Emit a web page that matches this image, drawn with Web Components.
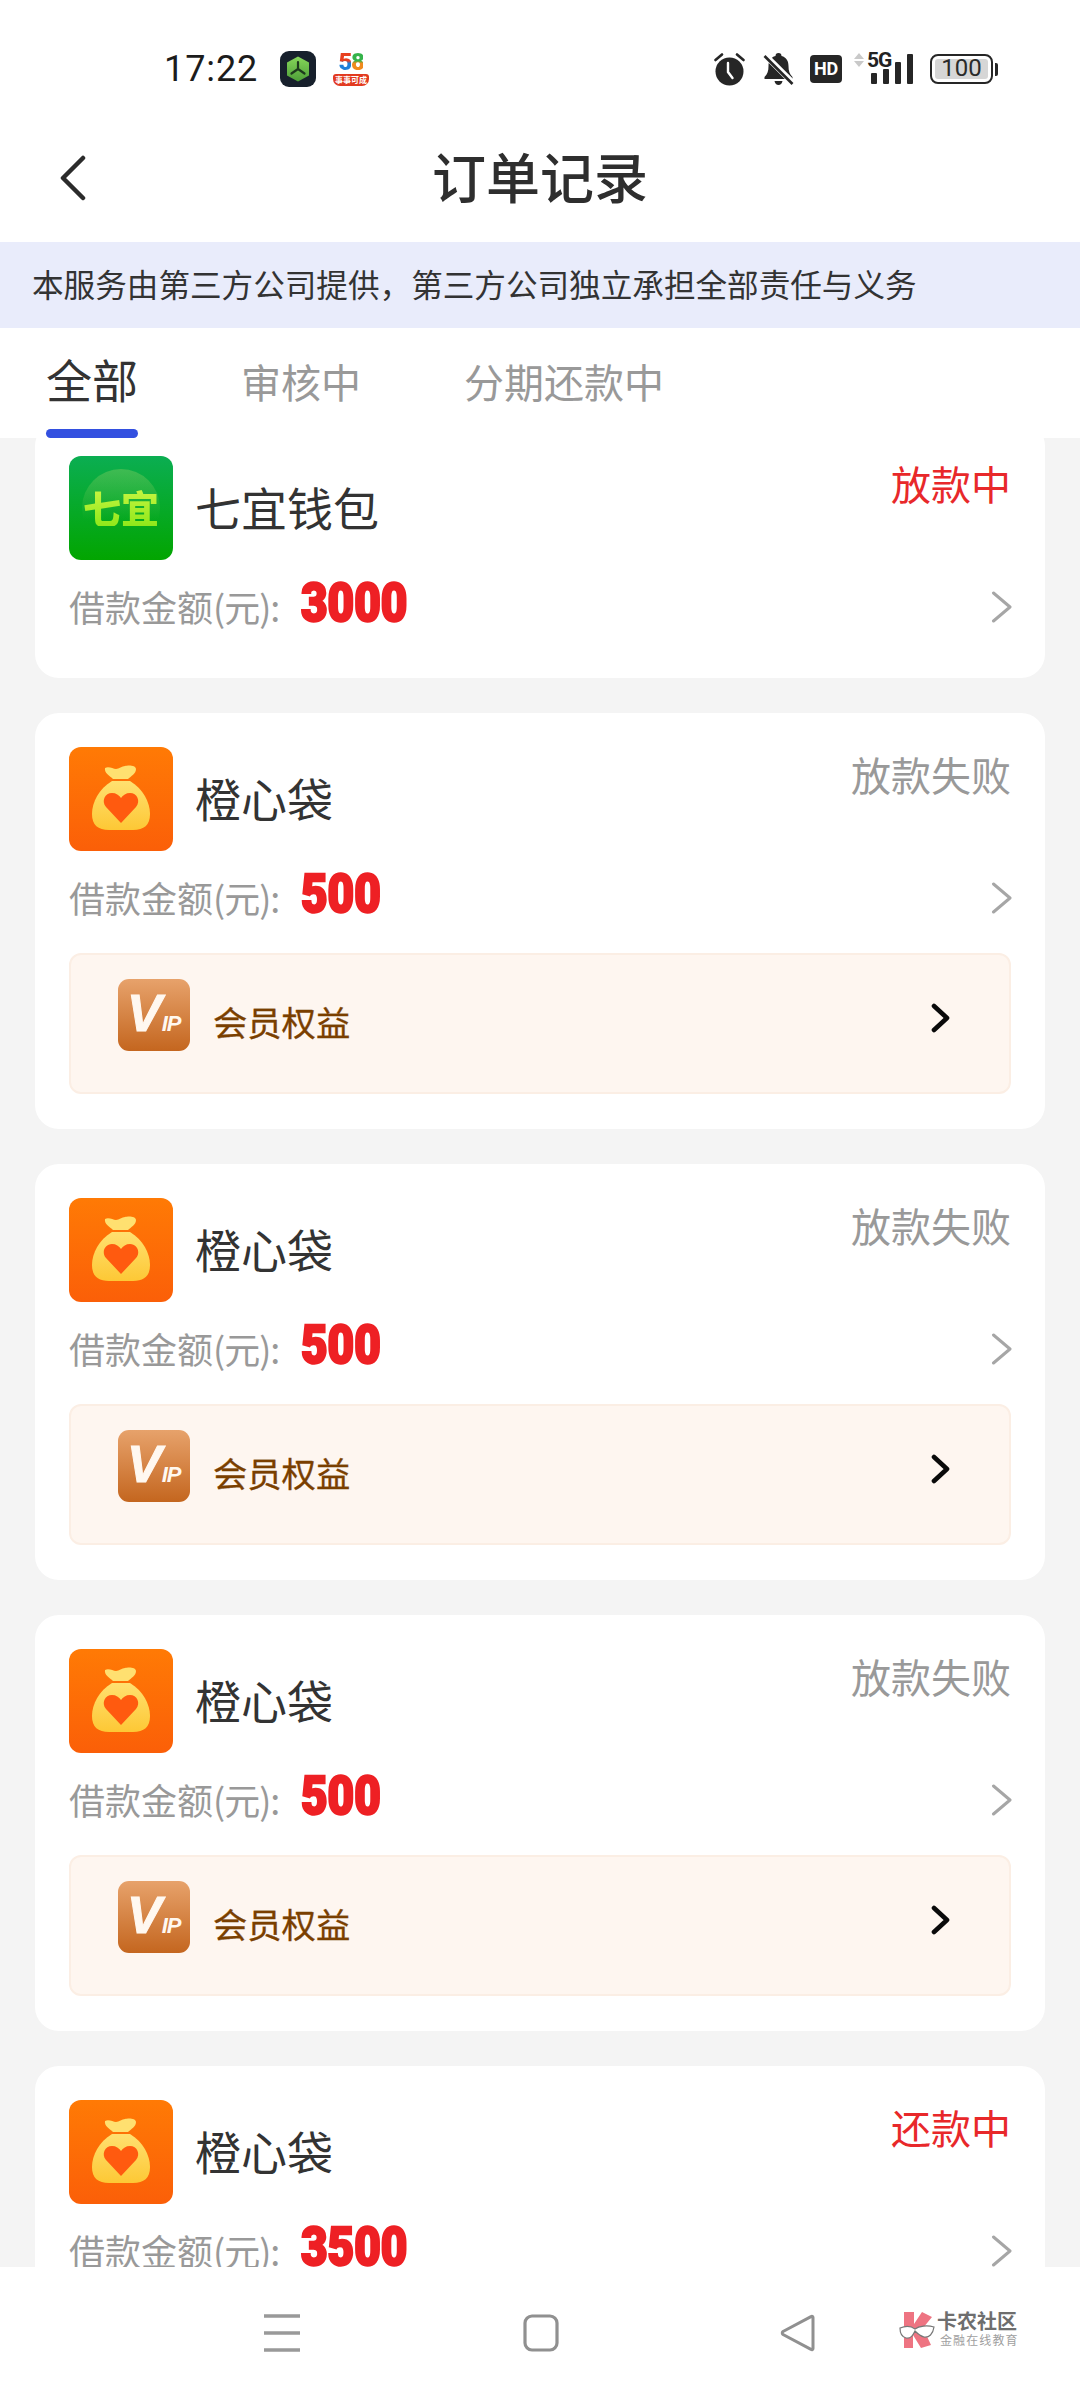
<!DOCTYPE html>
<html lang="zh">
<head>
<meta charset="utf-8">
<title>订单记录</title>
<style>
  html, body { margin: 0; padding: 0; }
  body {
    width: 1080px;
    height: 2400px;
    overflow: hidden;
    display: flex;
    flex-direction: column;
    background: #f4f4f4;
    font-family: "Noto Sans CJK SC", "Noto Sans", sans-serif;
  }
  order-list { flex: 1; min-height: 0; }
</style>
</head>
<body>
  <status-bar></status-bar>
  <page-header title="订单记录"></page-header>
  <notice-banner>本服务由第三方公司提供，第三方公司独立承担全部责任与义务</notice-banner>
  <order-tabs></order-tabs>
  <order-list>
    <order-card name="七宜钱包" status="放款中" amount="3000" app="qiyi" active plain></order-card>
    <order-card name="橙心袋" status="放款失败" amount="500" app="bag"></order-card>
    <order-card name="橙心袋" status="放款失败" amount="500" app="bag"></order-card>
    <order-card name="橙心袋" status="放款失败" amount="500" app="bag"></order-card>
    <order-card name="橙心袋" status="还款中" amount="3500" app="bag" active plain></order-card>
  </order-list>
  <nav-bar></nav-bar>

<script>
(function () {
    const CJK = '"Noto Sans CJK SC", "Noto Sans", sans-serif';

    class StatusBar extends HTMLElement {
        constructor() {
            super();
            this.attachShadow({mode: "open"}).innerHTML = `
            <style>
              :host { display: flex; align-items: center; height: 120px; background: #fff; padding: 18px 82px 0 164px; box-sizing: border-box; color: #222; flex: none; }
              .time { font: 400 36px Roboto, sans-serif; letter-spacing: .9px; color: #1c1c1c; width: 116px; }
              .app { width: 36px; height: 36px; flex: none; }
              .app58 { margin-left: 16px; width: 38px; height: 34px; display: flex; flex-direction: column; align-items: center; }
              .n { font: 900 24px/20px Roboto, sans-serif; letter-spacing: -1.500px; }
              .n i { font-style: normal; -webkit-background-clip: text; background-clip: text; color: transparent; }
              .pill { width: 36px; height: 12px; margin-top: 2px; border-radius: 3px 3px 7px 7px; background: #e23a20; color: #fff; font: 700 8px/12px ${CJK}; text-align: center; white-space: nowrap; overflow: hidden; }
              .right { margin-left: auto; display: flex; align-items: center; }
              svg { display: block; flex: none; }
              .hd { margin-left: 16px; width: 32px; height: 28px; border-radius: 4px; background: #262626; color: #fff; font: 700 18px/28px Roboto, sans-serif; text-align: center; letter-spacing: -.3px; }
              .net { position: relative; margin-left: 12px; width: 60px; height: 34px; }
              .g { position: absolute; left: 13px; top: -4px; font: 700 21px/24px Roboto, sans-serif; letter-spacing: -1px; color: #222; }
              .batt { margin-left: 16px; width: 63px; height: 30px; box-sizing: border-box; border: 2.5px solid #262626; border-radius: 8px; padding: 3px; position: relative; }
              .fill { height: 100%; background: #d6d6d6; border-radius: 3px; color: #2a2a2a; font: 400 24px/19px Roboto, sans-serif; text-align: center; }
              .tip { width: 3px; height: 13px; margin-left: 2px; background: #262626; border-radius: 0 2px 2px 0; }
            </style>
            <span class="time">17:22</span>
            <svg class="app" viewBox="0 0 36 36">
              <defs><linearGradient id="c" x1="0" y1="0" x2="0" y2="1"><stop offset="0" stop-color="#86d65a"/><stop offset="1" stop-color="#4d9e38"/></linearGradient></defs>
              <rect width="36" height="36" rx="9" fill="#17202c"/>
              <path d="M18 5.500 29 11.500V24.500L18 30.500 7 24.500V11.500Z" fill="url(#c)"/>
              <path d="M18 18V11M18 18 11.500 22.500M18 18 24.500 22.500" stroke="#1d3a1d" stroke-width="2.200" fill="none" stroke-linecap="round"/>
            </svg>
            <div class="app58"><div class="n"><i style="background-image:linear-gradient(#e8401f 45%,#1f7fd8 55%)">5</i><i style="background-image:linear-gradient(#35b34a 45%,#f08a1d 55%)">8</i></div><div class="pill">事事可成</div></div>
            <div class="right">
              <svg width="31" height="33" viewBox="0 0 31 33">
                <circle cx="15.500" cy="18.500" r="14" fill="#262626"/>
                <path d="M1.500 7 8 1.500M29.500 7 23 1.500" stroke="#262626" stroke-width="2.600" stroke-linecap="round"/>
                <path d="M14 10V19L18.500 25" stroke="#fff" stroke-width="2.400" fill="none" stroke-linecap="round"/>
              </svg>
              <svg width="31" height="34" viewBox="0 0 31 34" style="margin-left:18px">
                <path d="M15.500 1c2 0 3 1.300 3 3 5 1.200 7 5.300 7 10 0 5 1 8 4 11v2H1.500v-2c3-3 4-6 4-11 0-4.700 2-8.800 7-10 0-1.700 1-3 3-3z" fill="#262626"/>
                <path d="M11.500 29h8c-.5 2.500-2 4-4 4s-3.500-1.500-4-4z" fill="#262626"/>
                <path d="M2 3 30 31" stroke="#fff" stroke-width="6"/>
                <path d="M1.500 4 29.500 32" stroke="#262626" stroke-width="2.600"/>
              </svg>
              <div class="hd">HD</div>
              <div class="net">
                <svg width="60" height="34" viewBox="0 0 60 34" style="position:absolute;left:0;top:0">
                  <path d="M5 1 10 7H0ZM5 15 10 9H0Z" fill="#c9c9c9"/>
                  <rect x="17" y="21" width="6" height="11" rx="1" fill="#262626"/>
                  <rect x="29" y="17" width="6" height="15" rx="1" fill="#262626"/>
                  <rect x="41" y="10" width="6" height="22" rx="1" fill="#262626"/>
                  <rect x="53" y="2" width="6" height="30" rx="1" fill="#262626"/>
                </svg>
                <span class="g">5G</span>
              </div>
              <div class="batt"><div class="fill">100</div></div>
              <div class="tip"></div>
            </div>`;
        }
    }

    class PageHeader extends HTMLElement {
        constructor() {
            super();
            this.attachShadow({mode: "open"}).innerHTML = `
            <style>
              :host { display: flex; align-items: center; justify-content: center; position: relative; height: 122px; box-sizing: border-box; padding-bottom: 10px; background: #fff; flex: none; }
              h1 { margin: 0; font: 500 54px/1 ${CJK}; color: #2e2e2e; }
              svg { position: absolute; left: 58px; top: 35px; }
            </style>
            <svg width="32" height="46" viewBox="0 0 32 46"><path d="M25 3 5 23 25 43" fill="none" stroke="#2b2b2b" stroke-width="4.500" stroke-linecap="round" stroke-linejoin="round"/></svg>
            <h1>${this.getAttribute('title')}</h1>`;
        }
    }

    class NoticeBanner extends HTMLElement {
        constructor() {
            super();
            this.attachShadow({mode: "open"}).innerHTML = `
            <style>
              :host { display: flex; align-items: center; height: 86px; box-sizing: border-box; padding: 0 0 3px 32px; background: #e9ecfb; color: #333; font: 400 31.600px/1 ${CJK}; flex: none; }
            </style>
            <slot></slot>`;
        }
    }

    class OrderTabs extends HTMLElement {
        constructor() {
            super();
            this.attachShadow({mode: "open"}).innerHTML = `
            <style>
              :host { display: flex; height: 110px; padding-left: 46px; gap: 103px; background: #fff; flex: none; box-sizing: border-box; position: relative; z-index: 1; }
              .tab { position: relative; font: 400 40px/1 ${CJK}; color: #999; padding-top: 33px; white-space: nowrap; }
              .tab.on { font-size: 46px; color: #333; padding-top: 27px; }
              .tab.on::after { content: ""; position: absolute; left: 0; right: 0; bottom: 0; height: 9px; border-radius: 5px; background: #3350e0; }
            </style>
            <div class="tab on">全部</div>
            <div class="tab">审核中</div>
            <div class="tab">分期还款中</div>`;
        }
    }

    class OrderList extends HTMLElement {
        constructor() {
            super();
            this.attachShadow({mode: "open"}).innerHTML = `
            <style>
              :host { display: block; overflow: hidden; }
              .inner { display: flex; flex-direction: column; gap: 35px; padding: 0 35px; margin-top: -16px; }
            </style>
            <div class="inner"><slot></slot></div>`;
        }
    }

    class AppIcon extends HTMLElement {
        constructor() {
            super();
            const bag = `
              <svg width="104" height="104" viewBox="0 0 104 104" style="display:block">
                <defs>
                  <linearGradient id="o" x1="0" y1="0" x2="0" y2="1"><stop offset="0" stop-color="#ff7a05"/><stop offset="1" stop-color="#fb5f08"/></linearGradient>
                  <linearGradient id="y" x1="0" y1="0" x2="0" y2="1"><stop offset="0" stop-color="#ffe070"/><stop offset="1" stop-color="#fdc835"/></linearGradient>
                </defs>
                <rect width="104" height="104" rx="12" fill="url(#o)"/>
                <path d="M36 21c4-2 8 1 11 1 3 0 6-3 9-3 3-1 11-1 11 3 0 5-5 7-8 10H44c-3-3-9-6-8-11z" fill="#ffe070"/>
                <path d="M43 34h18c13 8 20 21 20 33 0 11-6 16-17 16H40c-11 0-17-5-17-16 0-12 7-25 20-33z" fill="url(#y)"/>
                <path d="M52 76 37 60c-5-6-1-14 6-14 4 0 7 2 9 5 2-3 5-5 9-5 7 0 11 8 6 14z" fill="#ff5a0f"/>
              </svg>`;
            const qiyi = `
              <div class="q"><div class="glow"></div><span>七宜</span></div>`;
            this.attachShadow({mode: "open"}).innerHTML = `
            <style>
              :host { display: block; width: 104px; height: 104px; flex: none; }
              .q { position: relative; width: 104px; height: 104px; border-radius: 12px; overflow: hidden; background: linear-gradient(#0bae52, #02a500); display: flex; align-items: center; justify-content: center; }
              .glow { position: absolute; left: 13px; top: 13px; width: 78px; height: 78px; border-radius: 50%; background: linear-gradient(rgba(150,210,100,.38), rgba(20,170,40,0) 65%); }
              .q span { position: relative; font: 900 38px/1 ${CJK}; background: linear-gradient(#c8f542, #8fe81a); -webkit-background-clip: text; background-clip: text; color: transparent; white-space: nowrap; margin-top: -2px; }
            </style>
            ${this.getAttribute('app') === 'qiyi' ? qiyi : bag}`;
        }
    }

    class VipRow extends HTMLElement {
        constructor() {
            super();
            this.attachShadow({mode: "open"}).innerHTML = `
            <style>
              :host { display: flex; align-items: flex-start; height: 141px; margin-top: 22px; box-sizing: border-box; padding: 24px 58px 0 47px; background: #fef6f0; border: 2px solid #fbeee4; border-radius: 12px; }
              .badge { width: 72px; height: 72px; border-radius: 11px; background: linear-gradient(#e7a26b, #c4661f); flex: none; color: #fff8f0; font-family: "Liberation Sans", sans-serif; font-weight: 700; font-style: italic; display: flex; align-items: baseline; padding: 6px 0 0 9px; box-sizing: border-box; }
              .v { font-size: 52px; line-height: 56px; -webkit-text-stroke: 1px #fff8f0; }
              .ip { font-size: 22px; line-height: 56px; letter-spacing: -1px; }
              .label { margin-left: 23px; font: 400 34.300px/72px ${CJK}; color: #7a3f00; margin-top: 6px; -webkit-text-stroke: .3px #7a3f00; }
              svg { margin-left: auto; margin-top: 24px; display: block; }
            </style>
            <div class="badge"><span class="v">V</span><span class="ip">IP</span></div>
            <span class="label">会员权益</span>
            <svg width="20" height="30" viewBox="0 0 20 30"><path d="M3 3 16 15 3 27" fill="none" stroke="#0a0a0a" stroke-width="4.600" stroke-linecap="round" stroke-linejoin="round"/></svg>`;
        }
    }

    class OrderCard extends HTMLElement {
        constructor() {
            super();
            const plain = this.hasAttribute('plain');
            this.attachShadow({mode: "open"}).innerHTML = `
            <style>
              :host { display: block; flex: none; padding: 34px 34px ${plain ? 38 : 35}px; background: #fff; border-radius: 24px; }
              .top { display: flex; align-items: flex-start; }
              .name { margin: 25px 0 0 22px; font: 400 46px/1.1 ${CJK}; color: #333; }
              .status { margin: 0 0 0 auto; font: 400 40px/54px ${CJK}; color: #999; }
              :host([active]) .status { color: #e8282a; }
              .row { display: flex; align-items: center; height: 66px; margin-top: 14px; }
              .lbl { font: 400 36px/1 ${CJK}; color: #999; white-space: nowrap; margin-top: -2px; }
              .lbl span { letter-spacing: -1px; }
              .amt { display: block; width: 0; margin-left: 22px; margin-top: -8px; font: 900 54px/1 Roboto, sans-serif; color: #ee2024; -webkit-text-stroke: 2.500px #ee2024; paint-order: stroke; transform: scaleX(.85); transform-origin: left center; white-space: nowrap; }
              .row svg { margin-left: auto; display: block; margin-right: -2px; }
            </style>
            <div class="top">
              <app-icon app="${this.getAttribute('app')}"></app-icon>
              <div class="name">${this.getAttribute('name')}</div>
              <div class="status">${this.getAttribute('status')}</div>
            </div>
            <div class="row">
              <span class="lbl">借款金额<span>(元):</span></span>
              <span class="amt">${this.getAttribute('amount')}</span>
              <svg width="22" height="32" viewBox="0 0 22 32"><path d="M2.500 2 19 16 2.500 30" fill="none" stroke="#a6a6a6" stroke-width="3" stroke-linecap="round" stroke-linejoin="round"/></svg>
            </div>
            ${plain ? '' : '<vip-row></vip-row>'}`;
        }
    }

    class NavBar extends HTMLElement {
        constructor() {
            super();
            this.attachShadow({mode: "open"}).innerHTML = `
            <style>
              :host { display: flex; position: relative; z-index: 2; align-items: flex-start; height: 133px; padding: 47px 0 0 263px; box-sizing: border-box; background: #fff; flex: none; }
              svg { display: block; flex: none; }
              .logo { display: flex; margin: -3px 0 0 83px; }
              .txt { margin-left: 2px; display: flex; flex-direction: column; }
              .a { font: 700 20px/20px ${CJK}; color: #6e6e6e; white-space: nowrap; }
              .b { font: 400 12px/14px ${CJK}; color: #a0a0a0; letter-spacing: 1.100px; white-space: nowrap; margin: 2px 0 0 3px; }
            </style>
            <svg width="38" height="38" viewBox="0 0 38 38"><path d="M1 2H37M1 19H37M1 36H37" stroke="#999" stroke-width="3.600"/></svg>
            <svg width="36" height="38" viewBox="0 0 36 38" style="margin-left:222px"><rect x="2" y="2" width="32" height="34" rx="7" fill="none" stroke="#909090" stroke-width="3.200"/></svg>
            <svg width="36" height="38" viewBox="0 0 36 38" style="margin-left:221px"><path d="M33 3.500V34.500c0 1-1 1.500-2 .8L3 20.500c-1-.8-1-2.200 0-3L31 2.700c1-.7 2-.2 2 .8z" fill="none" stroke="#909090" stroke-width="3" stroke-linejoin="round"/></svg>
            <div class="logo">
              <svg width="36" height="38" viewBox="0 0 36 38">
                <path d="M5 1H15V13L23 1 33 6 24 17 32 34 22 37 14 24V37H5Z" fill="#ee7482"/>
                <path d="M1 17C6 15 12 15 16 18 20 15 28 14 35 16 34 23 30 27 25 26 21 25 18 22 16 20 14 24 12 28 7 27 3 26 1 22 1 17Z" fill="#fff" stroke="#777" stroke-width="1.200"/>
              </svg>
              <div class="txt"><span class="a">卡农社区</span><span class="b">金融在线教育</span></div>
            </div>`;
        }
    }

    customElements.define('status-bar', StatusBar);
    customElements.define('page-header', PageHeader);
    customElements.define('notice-banner', NoticeBanner);
    customElements.define('order-tabs', OrderTabs);
    customElements.define('order-list', OrderList);
    customElements.define('app-icon', AppIcon);
    customElements.define('vip-row', VipRow);
    customElements.define('order-card', OrderCard);
    customElements.define('nav-bar', NavBar);
})();
</script>
</body>
</html>
